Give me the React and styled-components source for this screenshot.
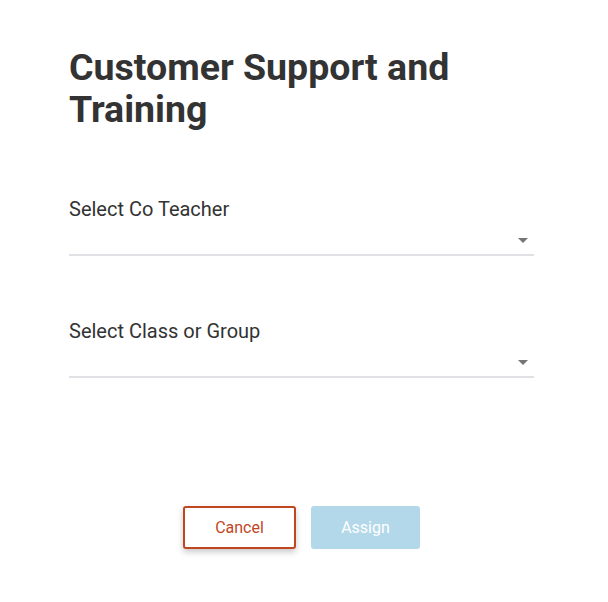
import React from "react";
import styled, { createGlobalStyle } from "styled-components";

const Global = createGlobalStyle`
  html, body { margin: 0; padding: 0; background: #fff; }
  body { font-family: Roboto, "Noto Sans", sans-serif; color: #333; }
`;

const Page = styled.div`
  width: 608px;
  height: 602px;
  box-sizing: border-box;
  padding: 46px 74px 0 69px;
  display: flex;
  flex-direction: column;
`;

const Title = styled.h1`
  margin: 0;
  font-size: 37.5px;
  line-height: 42px;
  font-weight: 700;
  color: #333;
  letter-spacing: 0;
`;

const Fields = styled.div`
  display: flex;
  flex-direction: column;
  gap: 63px;
  margin-top: 67px;
`;

const Field = styled.div`
  display: flex;
  flex-direction: column;
`;

const Label = styled.label`
  font-size: 20px;
  line-height: 24px;
  color: #333;
`;

const SelectBox = styled.div`
  height: 33px;
  border-bottom: 2px solid #dfe1e4;
  display: flex;
  justify-content: flex-end;
  align-items: flex-end;
`;

const Arrow = styled.svg`
  width: 24px;
  height: 24px;
  fill: #757575;
  margin-right: -1px;
  margin-bottom: 2px;
`;

const Actions = styled.div`
  display: flex;
  justify-content: center;
  gap: 15px;
  margin-top: 128px;
`;

const Button = styled.button`
  height: 43px;
  box-sizing: border-box;
  font-family: Roboto, sans-serif;
  font-size: 16px;
  border-radius: 3px;
  cursor: pointer;
  ${(p) =>
    p.$variant === "outline"
      ? `
    width: 113px;
    background: #fff;
    color: #c0461f;
    border: 2px solid #c0461f;
    box-shadow: 0 3px 6px rgba(0,0,0,0.22);
  `
      : `
    width: 109px;
    background: #b3d8ea;
    color: #fff;
    border: none;
  `}
`;

const SelectField = ({ label }) => (
  <Field>
    <Label>{label}</Label>
    <SelectBox>
      <Arrow viewBox="0 0 24 24">
        <path d="M7 10l5 5 5-5z" />
      </Arrow>
    </SelectBox>
  </Field>
);

export default function App() {
  return (
    <>
      <Global />
      <Page>
        <Title>
          Customer Support and
          <br />
          Training
        </Title>
        <Fields>
          <SelectField label="Select Co Teacher" />
          <SelectField label="Select Class or Group" />
        </Fields>
        <Actions>
          <Button $variant="outline">Cancel</Button>
          <Button $variant="filled" disabled>
            Assign
          </Button>
        </Actions>
      </Page>
    </>
  );
}
